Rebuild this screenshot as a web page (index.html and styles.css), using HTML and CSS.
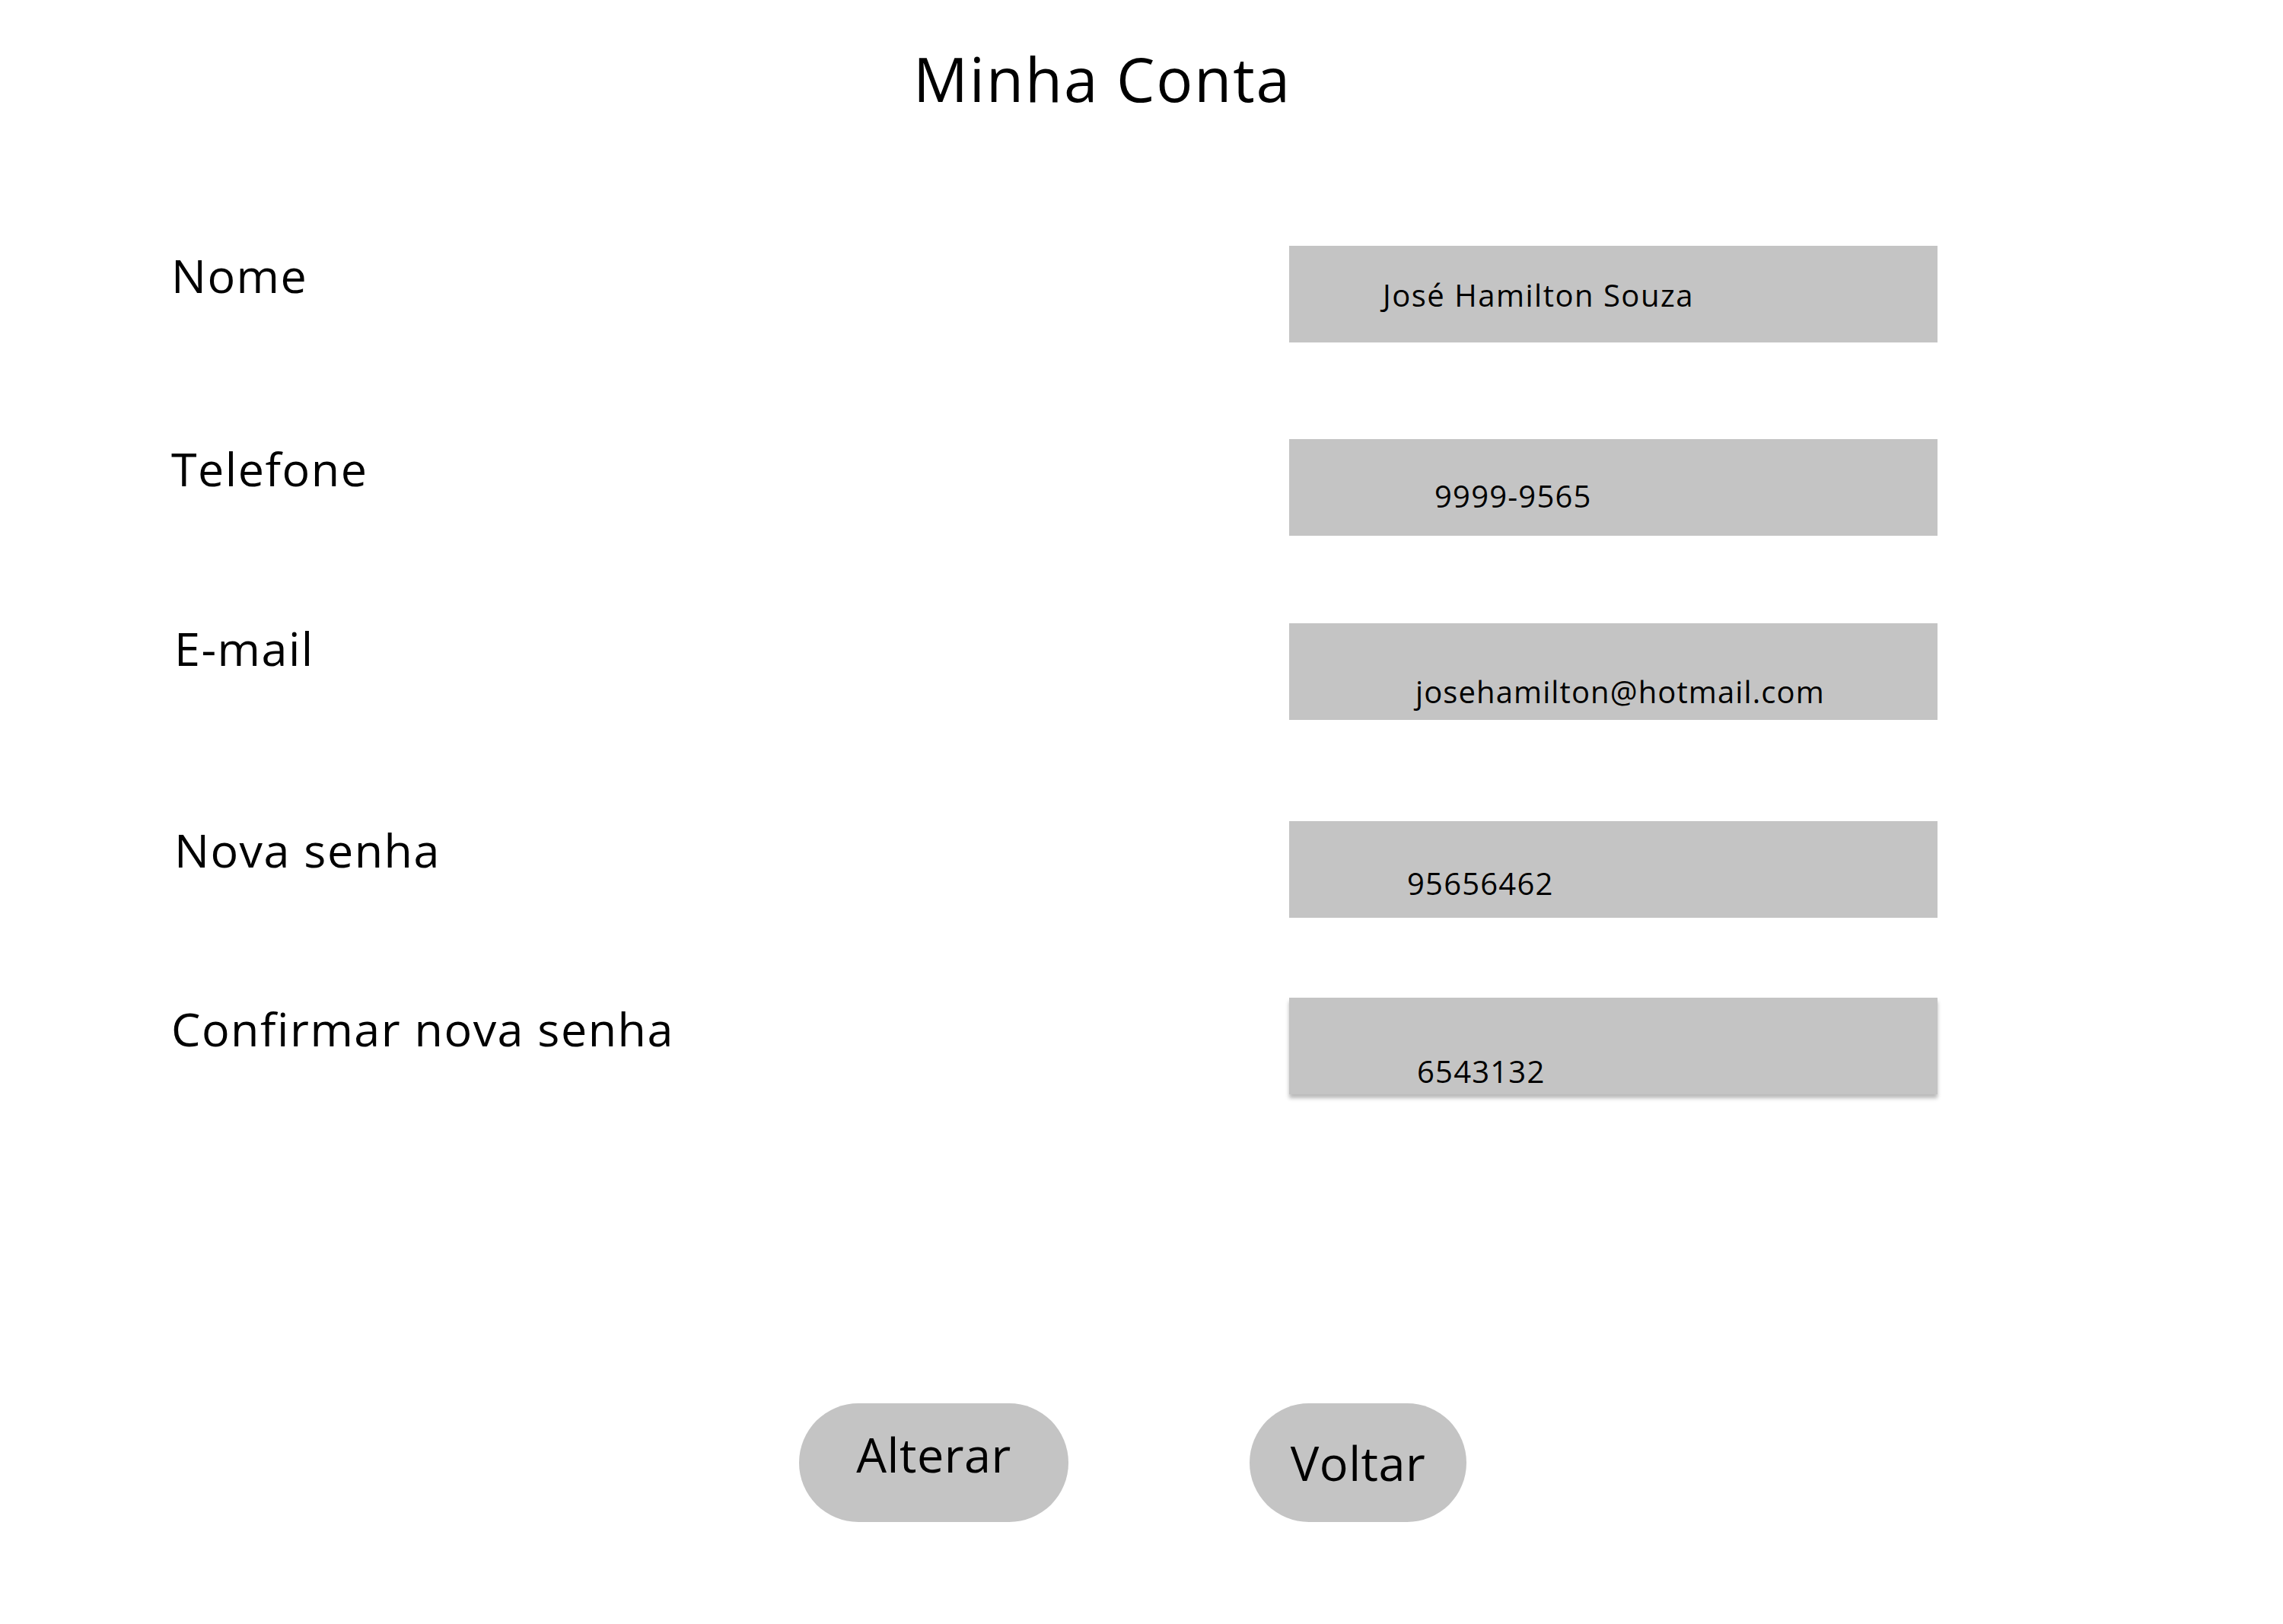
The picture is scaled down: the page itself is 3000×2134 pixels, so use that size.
FILE: index.html
```html
<!DOCTYPE html>
<html lang="pt-BR">
<head>
<meta charset="utf-8">
<title>Minha Conta</title>
<link rel="stylesheet" href="styles.css">
</head>
<body>
<main class="page">
  <h1 class="title">Minha Conta</h1>
  <section class="form">
    <div class="row row-1">
      <div class="label">Nome</div>
      <div class="field field-1">José Hamilton Souza</div>
    </div>
    <div class="row row-2">
      <div class="label">Telefone</div>
      <div class="field field-2">9999-9565</div>
    </div>
    <div class="row row-3">
      <div class="label label-shift">E-mail</div>
      <div class="field field-3">josehamilton@hotmail.com</div>
    </div>
    <div class="row row-4">
      <div class="label label-shift">Nova senha</div>
      <div class="field field-4">95656462</div>
    </div>
    <div class="row row-5">
      <div class="label">Confirmar nova senha</div>
      <div class="field field-5">6543132</div>
    </div>
  </section>
  <div class="actions">
    <button class="btn btn-alterar">Alterar</button>
    <button class="btn btn-voltar">Voltar</button>
  </div>
</main>
</body>
</html>
```
FILE: styles.css
```css
html, body {
  margin: 0;
  padding: 0;
  background: #ffffff;
}
body {
  font-family: "Open Sans", "Noto Sans", sans-serif;
  color: #000000;
}
.page {
  width: 3000px;
  height: 2134px;
  padding-top: 48px;
  box-sizing: border-box;
}
.title {
  margin: 0;
  font-size: 80px;
  font-weight: 400;
  line-height: 109px;
  letter-spacing: 1.9px;
  text-align: center;
  padding-right: 103px;
}
.form {
  display: flex;
  flex-direction: column;
  padding-left: 225px;
}
.row {
  display: flex;
  align-items: flex-start;
}
.row-1 { margin-top: 166px; }
.row-2 { margin-top: 127px; }
.row-3 { margin-top: 115px; }
.row-4 { margin-top: 133px; }
.row-5 { margin-top: 105px; }

.label {
  width: 1469px;
  box-sizing: border-box;
  font-size: 61px;
  line-height: 83px;
  letter-spacing: 1.5px;
}
.label-shift { padding-left: 4px; }
.row-1 .label { margin-top: -3px; }
.row-2 .label { margin-top: -3px; }
.row-3 .label { margin-top: -9px; }
.row-4 .label { margin-top: -4px; }
.row-5 .label { margin-top: -1px; }

.field {
  width: 852px;
  height: 127px;
  box-sizing: border-box;
  background: #c4c4c4;
  font-size: 40px;
  line-height: 54px;
  letter-spacing: 1.2px;
  white-space: nowrap;
}
.field-1 { padding: 38px 0 0 123px; letter-spacing: 1.5px; }
.field-2 { padding: 48px 0 0 191px; }
.field-3 { padding: 63px 0 0 166px; letter-spacing: 1.1px; }
.field-4 { padding: 55px 0 0 155px; }
.field-5 { padding: 70px 0 0 168px; box-shadow: 0 5px 5px rgba(0, 0, 0, 0.28); }

.actions {
  display: flex;
  gap: 238px;
  padding-left: 1050px;
  margin-top: 406px;
}
.btn {
  display: flex;
  align-items: center;
  justify-content: center;
  height: 156px;
  box-sizing: border-box;
  border: none;
  border-radius: 78px;
  background: #c4c4c4;
  color: #000000;
  font-family: "Open Sans", "Noto Sans", sans-serif;
  font-size: 63px;
  line-height: 86px;
  letter-spacing: 0.5px;
  padding: 0;
}
.btn-alterar {
  width: 354px;
  padding-bottom: 22px;
}
.btn-voltar {
  width: 285px;
}
```
